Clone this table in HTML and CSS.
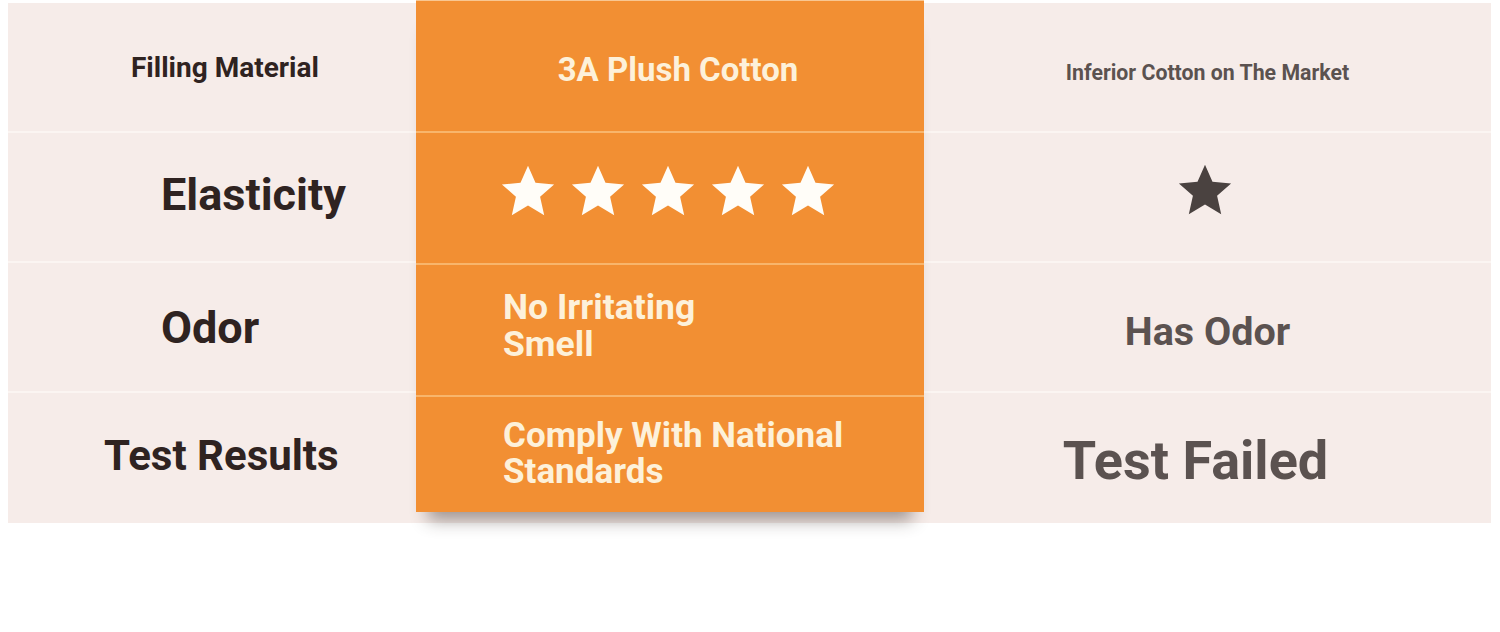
FILE: index.html
```html
<!DOCTYPE html>
<html>
<head>
<meta charset="utf-8">
<link rel="stylesheet" href="styles.css">
</head>
<body>
<div class="panel">
  <div class="col col-left">
    <div class="cell r1"><span class="t-filling">Filling Material</span></div>
    <div class="cell r2"><span class="t-elast">Elasticity</span></div>
    <div class="cell r3"><span class="t-odor">Odor</span></div>
    <div class="cell r4"><span class="t-results">Test Results</span></div>
  </div>
  <div class="col col-mid">
    <div class="mcell m1"><span class="t-plush">3A Plush Cotton</span></div>
    <div class="mcell m2">
      <div class="stars">
        <svg class="star white" viewBox="0 0 24 24"><polygon points="12,1.5 15.1,8.6 22.8,9.3 17,14.4 18.7,22 12,18 5.3,22 7,14.4 1.2,9.3 8.9,8.6"/></svg>
        <svg class="star white" viewBox="0 0 24 24"><polygon points="12,1.5 15.1,8.6 22.8,9.3 17,14.4 18.7,22 12,18 5.3,22 7,14.4 1.2,9.3 8.9,8.6"/></svg>
        <svg class="star white" viewBox="0 0 24 24"><polygon points="12,1.5 15.1,8.6 22.8,9.3 17,14.4 18.7,22 12,18 5.3,22 7,14.4 1.2,9.3 8.9,8.6"/></svg>
        <svg class="star white" viewBox="0 0 24 24"><polygon points="12,1.5 15.1,8.6 22.8,9.3 17,14.4 18.7,22 12,18 5.3,22 7,14.4 1.2,9.3 8.9,8.6"/></svg>
        <svg class="star white" viewBox="0 0 24 24"><polygon points="12,1.5 15.1,8.6 22.8,9.3 17,14.4 18.7,22 12,18 5.3,22 7,14.4 1.2,9.3 8.9,8.6"/></svg>
      </div>
    </div>
    <div class="mcell m3 left"><span class="t-smell">No Irritating<br>Smell</span></div>
    <div class="mcell m4 left"><span class="t-comply">Comply With National<br>Standards</span></div>
  </div>
  <div class="col col-right">
    <div class="cell r1"><span class="t-inferior">Inferior Cotton on The Market</span></div>
    <div class="cell r2">
      <svg class="star dark" viewBox="0 0 24 24"><polygon points="12,1.5 15.1,8.6 22.8,9.3 17,14.4 18.7,22 12,18 5.3,22 7,14.4 1.2,9.3 8.9,8.6"/></svg>
    </div>
    <div class="cell r3"><span class="t-has">Has Odor</span></div>
    <div class="cell r4"><span class="t-failed">Test Failed</span></div>
  </div>
</div>
</body>
</html>
```

FILE: styles.css
```css
html, body {
  margin: 0;
  padding: 0;
  background: #ffffff;
}
body {
  font-family: Roboto, "Liberation Sans", sans-serif;
  font-weight: 700;
  width: 1500px;
  height: 632px;
  overflow: hidden;
}
.panel {
  margin: 3px 0 0 8px;
  width: 1483px;
  height: 520px;
  background: #f6ece9;
  display: flex;
  align-items: flex-start;
}
.col {
  display: flex;
  flex-direction: column;
}
.col-left {
  width: 408px;
}
.col-right {
  flex: 1;
}
.cell {
  height: 128px;
  border-bottom: 2px solid #fbf5f2;
  display: flex;
  align-items: center;
  justify-content: center;
  box-sizing: content-box;
}
.cell.r4 {
  border-bottom: none;
  height: 130px;
}
.col-left .cell {
  justify-content: flex-start;
  color: #2f2321;
}
.col-right .cell {
  color: #5b5250;
}
.col-mid {
  width: 508px;
  margin-top: -3px;
  height: 512px;
  background: #f28f33;
  box-shadow: 0 20px 16px -12px rgba(50, 40, 35, 0.45);
  border-top: 1px solid #f9c792;
  box-sizing: border-box;
  position: relative;
  z-index: 1;
  color: #fdf1da;
}
.mcell {
  height: 130px;
  border-bottom: 2px solid #f8b56c;
  display: flex;
  align-items: center;
  justify-content: center;
}
.mcell.m4 {
  border-bottom: none;
  flex: 1;
  height: auto;
}
.mcell.left {
  justify-content: flex-start;
  padding-left: 87px;
}

.t-filling { font-size: 28px; padding-left: 123px; }
.t-elast { font-size: 45px; padding-left: 153px; padding-bottom: 6px; }
.t-odor { font-size: 45px; padding-left: 153px; }
.t-results { font-size: 42px; padding-left: 96px; padding-bottom: 6px; }

.t-plush { font-size: 33px; padding-left: 16px; padding-top: 6px; }
.t-smell { font-size: 35.5px; line-height: 37px; padding-bottom: 8px; }
.t-comply { font-size: 35px; line-height: 36px; padding-bottom: 2px; }

.t-inferior { font-size: 21.3px; padding-top: 10px; }
.t-has { font-size: 39.5px; padding-top: 8px; }
.t-failed { font-size: 54px; padding-right: 24px; padding-top: 4px; }

.stars {
  display: flex;
  gap: 12px;
  padding-bottom: 14px;
  padding-right: 4px;
}
.star {
  width: 58px;
  height: 58px;
  display: block;
}
.star.white polygon {
  fill: #fffdf8;
}
.star.dark {
  width: 58px;
  height: 58px;
  padding-bottom: 14px;
  padding-right: 6px;
}
.star.dark polygon {
  fill: #4a4240;
}
```
